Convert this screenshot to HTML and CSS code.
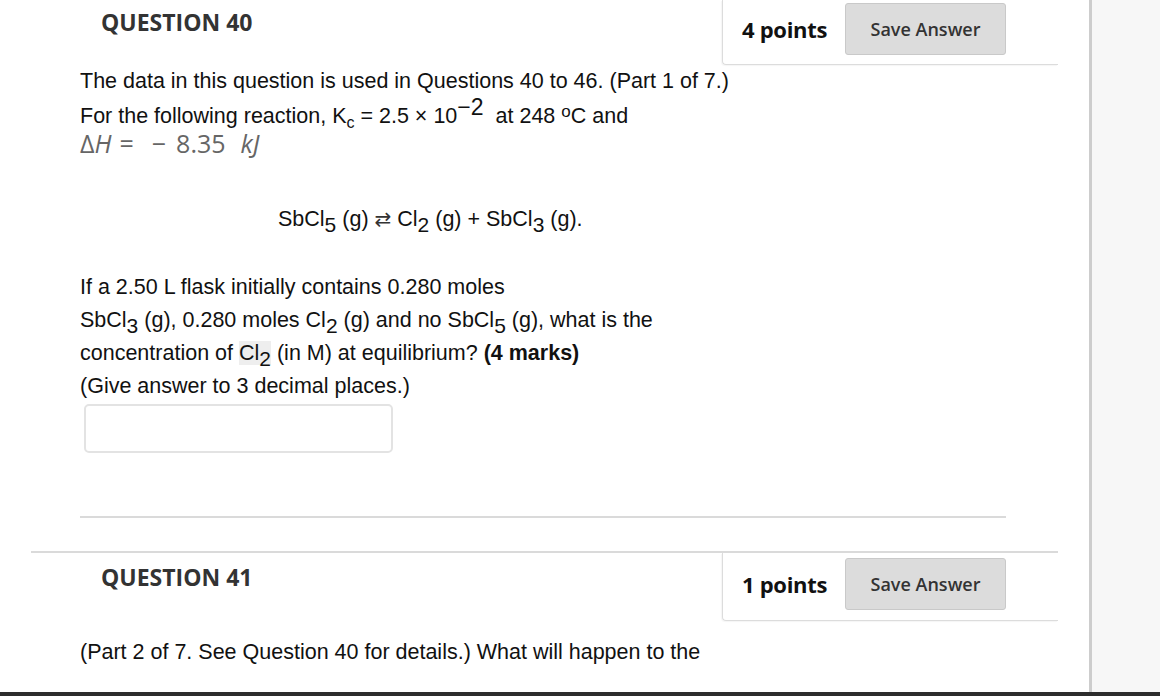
FILE: index.html
```html
<!DOCTYPE html>
<html lang="en">
<head>
  <meta charset="UTF-8">
  <title>Test - Questions</title>
  <link rel="stylesheet" href="styles.css">
</head>
<body>

  <div class="page">
    <div class="workspace">
      <div class="content">

        <!-- Question 40 -->
        <div class="question">
          <div class="question-head">
            <h3 class="question-title">QUESTION 40</h3>
            <div class="points-box">
              <span class="points">4 points</span>
              <button class="save-btn">Save Answer</button>
            </div>
          </div>
          <div class="question-body">
            <p class="line first">The data in this question is used in Questions 40 to 46. (Part 1 of 7.)</p>
            <p class="line second">For the following reaction, K<sub class="sub-c">c</sub> = 2.5 × 10<sup class="exp">−2</sup> at 248 <sup class="deg">o</sup>C and</p>
            <p class="math-line">Δ<i>H</i><span class="op">=</span><span class="op">−</span>8.35<i class="unit">kJ</i></p>
            <p class="reaction">SbCl<sub>5</sub> (g) <span class="arrow">⇄</span> Cl<sub>2</sub> (g) + SbCl<sub>3</sub> (g).</p>
            <div class="prompt">
              <p>If a 2.50 L flask initially contains 0.280 moles</p>
              <p>SbCl<sub>3</sub> (g), 0.280 moles Cl<sub>2</sub> (g) and no SbCl<sub>5</sub> (g), what is the</p>
              <p>concentration of <span class="mark">Cl<sub>2</sub></span> (in M) at equilibrium? <b>(4 marks)</b></p>
              <p>(Give answer to 3 decimal places.)</p>
            </div>
            <input class="answer" type="text">
            <hr class="divider">
          </div>
        </div>

        <!-- Question 41 -->
        <div class="question next">
          <div class="question-head">
            <h3 class="question-title">QUESTION 41</h3>
            <div class="points-box">
              <span class="points">1 points</span>
              <button class="save-btn">Save Answer</button>
            </div>
          </div>
          <div class="question-body">
            <p class="prompt-start">(Part 2 of 7. See Question 40 for details.) What will happen to the</p>
          </div>
        </div>

      </div>
      <div class="rail"></div>
    </div>
    <div class="taskbar"></div>
  </div>

</body>
</html>
```

FILE: styles.css
```css
body {
  margin: 0;
  background: #fff;
  font-family: 'Liberation Sans', Arial, sans-serif;
  color: #111;
}

.page {
  display: flex;
  flex-direction: column;
  height: 100vh;
  overflow: hidden;
}

.workspace {
  display: flex;
  flex: 1;
  overflow: hidden;
}

.content {
  width: 1089px;
  background: #fff;
}

.rail {
  flex: 1;
  background: #f7f7f7;
  border-left: 3px solid #cdcdcd;
}

.taskbar {
  height: 4px;
  background: #2d2d2d;
}

/* question block */
.question {
  margin-left: 31px;
  width: 1027px;
}

.question.next {
  margin-top: 33px;
  border-top: 2px solid #dadada;
}

.question-head {
  display: flex;
  justify-content: space-between;
  align-items: flex-start;
}

.question-title {
  margin: 0;
  padding: 7px 0 0 70px;
  font-family: 'Open Sans', sans-serif;
  font-size: 23px;
  line-height: 31px;
  font-weight: 700;
  color: #333;
}

.next .question-title {
  padding-top: 9px;
}

.points-box {
  box-sizing: border-box;
  display: flex;
  align-items: center;
  width: 336px;
  padding: 3px 52px 9px 19px;
  border-left: 1px solid #dcdcdc;
  border-bottom: 1px solid #dcdcdc;
  border-bottom-left-radius: 4px;
  box-shadow: -1px 1px 1px rgba(0, 0, 0, 0.04);
}

.next .points-box {
  padding: 5px 52px 10px 19px;
}

.points {
  flex: 1;
  font-family: 'Open Sans', sans-serif;
  font-size: 22px;
  font-weight: 700;
  color: #111;
  letter-spacing: -0.3px;
}

.save-btn {
  width: 161px;
  height: 52px;
  font-family: 'Open Sans', sans-serif;
  font-size: 18px;
  font-weight: 600;
  color: #333;
  background: #dcdcdc;
  border: 1px solid #c9c9c9;
  border-radius: 3px;
}

/* question text */
.question-body {
  padding: 0 52px 0 49px;
}

.question-body p {
  margin: 0;
}

.line {
  font-size: 21.5px;
}

.line.first {
  margin-top: 2px;
  line-height: 28px;
}

.line.second {
  margin-top: 6px;
  line-height: 30px;
}

.sub-c {
  font-size: 16px;
  vertical-align: -5px;
  line-height: 0;
}

.exp {
  font-size: 23px;
  vertical-align: 8px;
  line-height: 0;
  margin-right: 6px;
}

.deg {
  font-size: 17px;
  vertical-align: 6px;
  line-height: 0;
}

.math-line {
  font-family: 'Open Sans', sans-serif;
  font-size: 25px;
  line-height: 24px;
  color: #666;
}

.math-line i {
  font-style: italic;
}

.op {
  margin: 0 10px 0 8px;
}

.unit {
  margin-left: 15px;
}

.reaction {
  padding-left: 198px;
  margin-top: 49px !important;
  font-size: 21.5px;
  line-height: 30px;
}

.reaction sub,
.prompt sub {
  font-size: 21px;
  vertical-align: -6px;
  line-height: 0;
}

.arrow {
  font-family: 'DejaVu Sans', sans-serif;
  font-size: 20px;
  color: #333;
}

.prompt {
  margin-top: 37px;
  font-size: 21.5px;
  line-height: 33px;
}

.prompt b {
  font-weight: 700;
}

.mark {
  background: #eeeeee;
}

.answer {
  display: block;
  box-sizing: border-box;
  width: 309px;
  height: 49px;
  margin: 1px 0 0 4px;
  border: 2px solid #e3e3e3;
  border-radius: 5px;
  background: #fff;
}

.divider {
  margin: 63px 0 0 0;
  border: none;
  border-top: 2px solid #dadada;
}

.prompt-start {
  margin-top: 16px !important;
  font-size: 21.5px;
  line-height: 30px;
}
```
